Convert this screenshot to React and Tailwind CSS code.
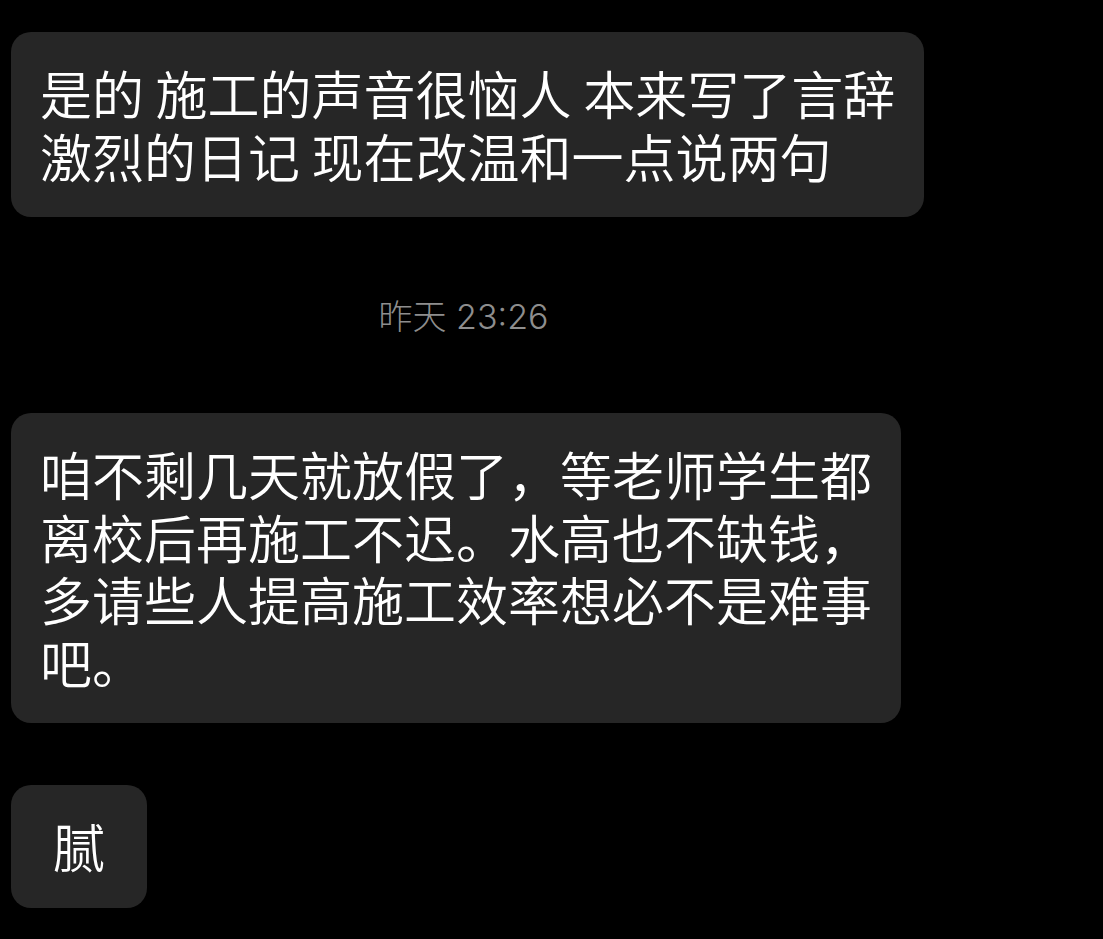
export default function App() {
  const font = { fontFamily: '"Noto Sans CJK SC", "Noto Sans", sans-serif' };
  const tsFont = { fontFamily: 'Inter, "Noto Sans CJK SC", sans-serif' };
  return (
    <div className="min-h-[939px] w-full bg-black" style={font}>
      <div className="w-[922px] pl-[11px] pt-[32px] flex flex-col">
        <div className="w-fit rounded-[20px] bg-[#262626] px-[29px] py-[30px] text-[52px] font-[350] leading-[62.5px] text-white whitespace-nowrap">
          是的 施工的声音很恼人 本来写了言辞
          <br />
          激烈的日记 现在改温和一点说两句
        </div>
        <div
          className="mt-[80px] h-[40px] flex items-center justify-center text-[34px] font-light leading-[40px] text-[#8e8e8e]"
          style={tsFont}
        >
          <span className="pr-[6px]">昨天 23:26</span>
        </div>
        <div className="mt-[76px] w-fit rounded-[20px] bg-[#262626] px-[29px] py-[30px] text-[52px] font-[350] leading-[62.5px] text-white whitespace-nowrap">
          咱不剩几天就放假了，等老师学生都
          <br />
          离校后再施工不迟。水高也不缺钱，
          <br />
          多请些人提高施工效率想必不是难事
          <br />
          吧。
        </div>
        <div className="mt-[62px] w-fit rounded-[20px] bg-[#262626] px-[42px] py-[30px] text-[52px] font-[350] leading-[62.5px] text-white whitespace-nowrap">
          腻
        </div>
      </div>
    </div>
  );
}
